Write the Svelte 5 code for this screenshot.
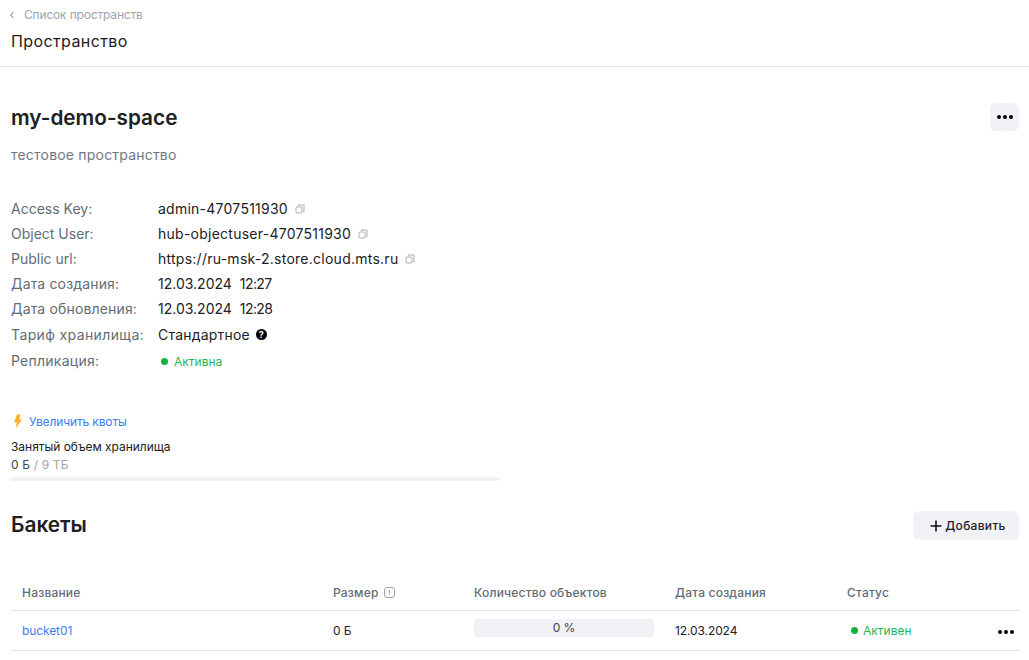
<script>
	const info = [
		{ label: 'Access Key:', value: 'admin-4707511930', copy: true },
		{ label: 'Object User:', value: 'hub-objectuser-4707511930', copy: true },
		{ label: 'Public url:', value: 'https://ru-msk-2.store.cloud.mts.ru', copy: true },
		{ label: 'Дата создания:', ru: true, value: '12.03.2024', time: '12:27' },
		{ label: 'Дата обновления:', ru: true, value: '12.03.2024', time: '12:28' }
	];
</script>

<div class="page">
	<header class="top">
		<a class="back" href="#spaces">
			<svg width="6" height="8" viewBox="0 0 6 8"><path d="M4.5 .8 1.5 4l3 3.2" fill="none" stroke="#9ca3af" stroke-width="1.1" /></svg>
			<span>Список пространств</span>
		</a>
		<h2>Пространство</h2>
	</header>

	<main class="content">
		<div class="name-row">
			<h1>my-demo-space</h1>
			<button class="more" aria-label="Действия">
				<span class="dots"><i></i><i></i><i></i></span>
			</button>
		</div>
		<p class="desc">тестовое пространство</p>

		<dl class="info">
			{#each info as row}
				<div class="row">
					<dt class:ru={row.ru}>{row.label}</dt>
					{#if row.time}
						<dd class="date">{row.value}<span class="time">{row.time}</span></dd>
					{:else}
						<dd class="latin">
							{row.value}
							<svg class="copy" width="10" height="10" viewBox="0 0 10 10">
								<path d="M3 1.5V1h6v6.5H8" fill="none" stroke="#a8adb8" />
								<rect x="1" y="3" width="6" height="6" rx="1" fill="none" stroke="#a8adb8" />
							</svg>
						</dd>
					{/if}
				</div>
			{/each}
			<div class="row tall">
				<dt class="wide">Тариф хранилища:</dt>
				<dd class="plan">
					Стандартное
					<span class="help">?</span>
				</dd>
			</div>
			<div class="row tall">
				<dt class="mid">Репликация:</dt>
				<dd class="status small"><i class="dot"></i>Активна</dd>
			</div>
		</dl>

		<a class="quota" href="#quota">
			<svg width="11" height="15" viewBox="0 0 11 15"><path d="M5 .5H8.6L7.2 5.4H10L3.6 14.5 4.9 8.5H2Z" fill="#fbb02d" /></svg>
			Увеличить квоты
		</a>
		<div class="usage">
			<div class="usage-title">Занятый объем хранилища</div>
			<div class="usage-value">0 Б <span>/ 9 ТБ</span></div>
			<div class="bar"></div>
		</div>

		<div class="section-head">
			<h3>Бакеты</h3>
			<button class="add">
				<svg width="12" height="12" viewBox="0 0 12 12"><path d="M6 .5v11M.5 6h11" stroke="#111" stroke-width="1.6" /></svg>
				Добавить
			</button>
		</div>

		<table>
			<thead>
				<tr>
					<th class="c1">Название</th>
					<th class="c2">
						<span class="th-icon">
							Размер
							<svg width="11" height="11" viewBox="0 0 11 11">
								<rect x=".5" y=".5" width="10" height="10" rx="2.5" fill="none" stroke="#9ca3af" />
								<path d="M5.5 2.8v3.4M5.5 7.2v1" stroke="#9ca3af" />
							</svg>
						</span>
					</th>
					<th class="c3">Количество объектов</th>
					<th class="c4">Дата создания</th>
					<th class="c5">Статус</th>
					<th class="c6"></th>
				</tr>
			</thead>
			<tbody>
				<tr>
					<td><a href="#bucket01">bucket01</a></td>
					<td class="plain">0 Б</td>
					<td><div class="pct">0 %</div></td>
					<td class="plain">12.03.2024</td>
					<td><span class="status"><i class="dot"></i>Активен</span></td>
					<td class="act"><span class="dots"><i></i><i></i><i></i></span></td>
				</tr>
			</tbody>
		</table>
	</main>
</div>

<style>
	:global(body) {
		margin: 0;
		background: #fff;
		font-family: Inter, 'Noto Sans', sans-serif;
		color: #1d2023;
	}

	.page {
		width: 1029px;
		height: 660px;
		overflow: hidden;
	}

	a {
		text-decoration: none;
	}

	.top {
		height: 67px;
		box-sizing: border-box;
		padding: 7px 11px 0;
		border-bottom: 1px solid #e2e3ea;
	}

	.back {
		display: flex;
		align-items: center;
		gap: 9px;
		height: 15px;
		font-size: 12px;
		line-height: 15px;
		letter-spacing: -0.17px;
		color: #9ea4ad;
	}

	.back svg {
		margin-left: -2px;
	}

	.top h2 {
		margin: 8px 0 0;
		font-size: 16px;
		line-height: 22px;
		font-weight: 400;
		letter-spacing: 0.4px;
	}

	.content {
		padding: 36px 10px 0 11px;
	}

	.name-row {
		display: flex;
		justify-content: space-between;
		align-items: center;
		height: 28px;
	}

	h1 {
		margin: 2px 0 0;
		font-size: 20.75px;
		line-height: 28px;
		font-weight: 600;
	}

	button {
		border: 0;
		background: #f1f2f6;
		font: inherit;
		color: inherit;
		padding: 0;
	}

	.more {
		width: 29px;
		height: 28px;
		border-radius: 6px;
		display: flex;
		align-items: center;
		justify-content: center;
	}

	.dots {
		display: inline-flex;
		gap: 2px;
	}

	.dots i {
		width: 4px;
		height: 4px;
		border-radius: 50%;
		background: #000;
	}

	.desc {
		margin: 14px 0 0;
		font-size: 14px;
		line-height: 20px;
		letter-spacing: 0.2px;
		color: #6f7782;
	}

	.info {
		margin: 31px 0 0;
		font-size: 14px;
		line-height: 25px;
	}

	.row {
		display: flex;
		height: 25px;
	}

	.row.tall {
		height: 26.5px;
		align-items: center;
	}

	dt {
		width: 147px;
		color: #626c77;
	}

	dt.ru {
		letter-spacing: 0.16px;
	}

	dt.mid {
		letter-spacing: 0.25px;
	}

	dt.wide {
		letter-spacing: 0.38px;
	}

	dd {
		margin: 0;
		display: flex;
		align-items: center;
		color: #1d2023;
	}

	.latin {
		letter-spacing: 0.25px;
	}

	.plan {
		letter-spacing: 0.2px;
	}

	.time {
		margin-left: 8px;
		letter-spacing: -0.6px;
	}

	.copy {
		margin-left: 7px;
	}

	.help {
		margin-left: 6px;
		width: 11px;
		height: 11px;
		border-radius: 50%;
		background: #000;
		color: #fff;
		font-size: 9px;
		line-height: 11px;
		font-weight: 700;
		text-align: center;
	}

	.status {
		display: inline-flex;
		align-items: center;
		font-size: 12px;
		color: #26b556;
	}

	.status.small {
		padding: 2px 0 0 3px;
	}

	.dot {
		width: 7px;
		height: 7px;
		border-radius: 50%;
		background: #12b23f;
		margin-right: 6px;
	}

	.quota {
		display: flex;
		align-items: center;
		gap: 6px;
		margin-top: 38px;
		height: 18px;
		font-size: 12px;
		letter-spacing: -0.14px;
		color: #3d7cf5;
	}

	.quota svg {
		margin-left: 1px;
	}

	.usage {
		margin-top: 8px;
		width: 489px;
		font-size: 12px;
		line-height: 18px;
	}

	.usage-title {
		letter-spacing: -0.04px;
	}

	.usage-value {
		letter-spacing: 0.15px;
		color: #40464d;
	}

	.usage-value span {
		color: #9ea4ad;
	}

	.bar {
		height: 4px;
		margin-top: 3px;
		border-radius: 2px;
		background: #f1f2f6;
	}

	.section-head {
		display: flex;
		justify-content: space-between;
		align-items: center;
		margin-top: 30px;
		height: 29px;
	}

	h3 {
		margin: -2px 0 0;
		font-size: 20.8px;
		line-height: 28px;
		font-weight: 600;
	}

	.add {
		display: flex;
		align-items: center;
		justify-content: center;
		gap: 3px;
		width: 106px;
		height: 29px;
		padding-left: 4px;
		box-sizing: border-box;
		border-radius: 6px;
		font-size: 12px;
		font-weight: 500;
		letter-spacing: 0.3px;
		color: #1d2023;
	}

	table {
		margin-top: 29px;
		width: 1008px;
		border-collapse: collapse;
		table-layout: fixed;
		font-size: 12px;
	}

	th {
		height: 41px;
		padding: 6px 0 0 11px;
		box-sizing: border-box;
		text-align: left;
		font-weight: 500;
		letter-spacing: 0.2px;
		color: #626c77;
		border-bottom: 1px solid #e0e1e7;
	}

	td {
		height: 40px;
		padding: 0 0 0 11px;
		box-sizing: border-box;
		border-bottom: 1px solid #e0e1e7;
	}

	.c1 { width: 311px; }
	.c2 { width: 141px; }
	.c3 { width: 201px; }
	.c4 { width: 172px; }
	.c5 { width: 125px; }

	td a {
		color: #3d7cf5;
		letter-spacing: -0.1px;
	}

	.plain {
		font-weight: 400;
		letter-spacing: -0.1px;
	}

	.th-icon {
		display: inline-flex;
		align-items: center;
		gap: 5px;
	}

	.pct {
		width: 180px;
		height: 18px;
		margin-top: -4px;
		border-radius: 3px;
		background: #f1f2f6;
		text-align: center;
		line-height: 17px;
		color: #40464d;
	}

	td .status {
		padding-left: 4px;
	}

	td .dot {
		margin-right: 5px;
	}

	.act {
		padding: 0 5px 1px 0;
		text-align: right;
	}
</style>
